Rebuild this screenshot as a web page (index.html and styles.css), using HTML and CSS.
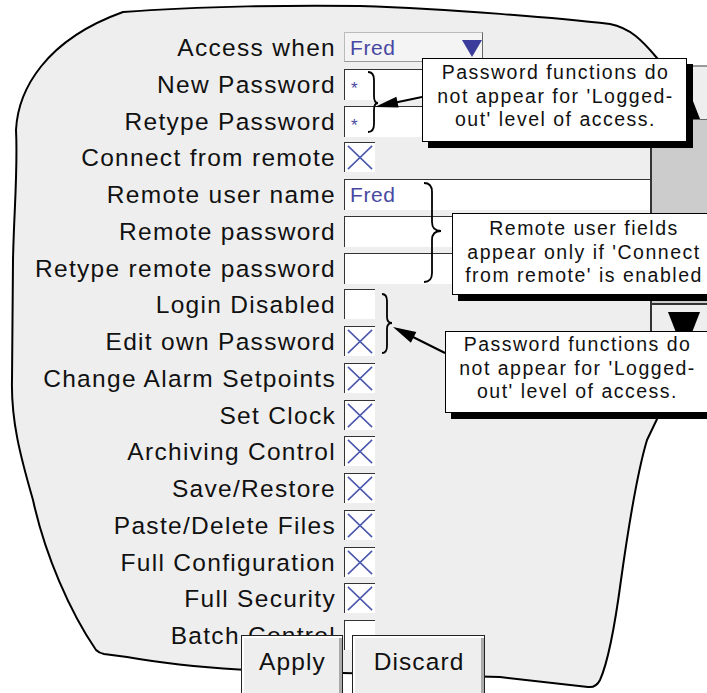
FILE: index.html
```html
<!DOCTYPE html>
<html lang="en">
<head>
    <meta charset="UTF-8">
    <meta name="viewport" content="width=device-width, initial-scale=1.0">
    <title>Security - user access</title>
    <link rel="stylesheet" href="styles.css">
</head>
<body>
    <svg class="defs" width="0" height="0">
        <defs>
            <symbol id="cross" viewBox="0 0 31 30">
                <path d="M3 3 L28 27 M28 3 L3 27"/>
            </symbol>
        </defs>
    </svg>

    <div class="canvas">
        <!-- BLOB OUTLINE -->
        <svg class="blob" width="707" height="693">
            <path d="M123 12 C200 6 300 5 360 6 C450 9 560 18 610 24 C630 28 642 40 657 58 L685 85 L705 140 L705 300 L672 400 L658 417 L647 440 C638 470 628 530 621 580 C615 625 609 660 600 680 Q596 688 588 687 L500 677 L343 673 C280 672 200 670 127 657 L104 654 Q99 653 96 650 C70 612 45 555 33 500 C20 455 11 420 12 380 L13 260 C14 210 18 170 16 130 C18 90 45 40 123 12 Z"/>
        </svg>

        <!-- FORM -->
        <div class="panel">
            <div class="rows">
                <div class="row">
                    <span class="label">Access when</span>
                    <span class="field select"><span class="value">Fred</span><i class="caret"></i></span>
                </div>
                <div class="row">
                    <span class="label">New Password</span>
                    <span class="field text"><span class="star">*</span></span>
                </div>
                <div class="row">
                    <span class="label">Retype Password</span>
                    <span class="field text"><span class="star">*</span></span>
                </div>
                <div class="row">
                    <span class="label">Connect from remote</span>
                    <span class="field check"><svg><use href="#cross"/></svg></span>
                </div>
                <div class="row">
                    <span class="label">Remote user name</span>
                    <span class="field text"><span class="value">Fred</span></span>
                </div>
                <div class="row">
                    <span class="label">Remote password</span>
                    <span class="field text"></span>
                </div>
                <div class="row">
                    <span class="label">Retype remote password</span>
                    <span class="field text"></span>
                </div>
                <div class="row">
                    <span class="label">Login Disabled</span>
                    <span class="field check"></span>
                </div>
                <div class="row">
                    <span class="label">Edit own Password</span>
                    <span class="field check"><svg><use href="#cross"/></svg></span>
                </div>
                <div class="row">
                    <span class="label">Change Alarm Setpoints</span>
                    <span class="field check"><svg><use href="#cross"/></svg></span>
                </div>
                <div class="row">
                    <span class="label">Set Clock</span>
                    <span class="field check"><svg><use href="#cross"/></svg></span>
                </div>
                <div class="row">
                    <span class="label">Archiving Control</span>
                    <span class="field check"><svg><use href="#cross"/></svg></span>
                </div>
                <div class="row">
                    <span class="label">Save/Restore</span>
                    <span class="field check"><svg><use href="#cross"/></svg></span>
                </div>
                <div class="row">
                    <span class="label">Paste/Delete Files</span>
                    <span class="field check"><svg><use href="#cross"/></svg></span>
                </div>
                <div class="row">
                    <span class="label">Full Configuration</span>
                    <span class="field check"><svg><use href="#cross"/></svg></span>
                </div>
                <div class="row">
                    <span class="label">Full Security</span>
                    <span class="field check"><svg><use href="#cross"/></svg></span>
                </div>
                <div class="row">
                    <span class="label">Batch Control</span>
                    <span class="field check"></span>
                </div>
            </div>
            <!-- SCROLL BAR -->
            <div class="scrollbar">
                <div class="sb-btn sb-up"><i></i></div>
                <div class="sb-track"></div>
                <div class="sb-btn sb-down"><i></i></div>
            </div>
        </div>

        <!-- BRACES AND ARROWS -->
        <svg class="marks" width="707" height="693">
            <path class="brace" d="M368 72 Q374 72 374 80 L374 96 Q374 103 378 103 Q374 103 374 110 L374 124 Q374 132 368 132"/>
            <path class="brace" d="M424 183 Q432 183 432 192 L432 222 Q432 231 441 231 Q432 231 432 240 L432 273 Q432 282 424 282"/>
            <path class="brace" d="M382 294 Q387 294 387 301 L387 317 Q387 323 392 323 Q387 323 387 329 L387 346 Q387 353 382 353"/>
            <line class="shaft" x1="422" y1="97" x2="397" y2="102.3"/>
            <polygon class="head" points="375,107 398.6,107.6 396.4,96.8"/>
            <line class="shaft" x1="445" y1="353" x2="413" y2="337"/>
            <polygon class="head" points="393,327 410.9,342.7 416.3,331.9"/>
        </svg>

        <!-- CALLOUTS -->
        <div class="callout c1">Password functions do<br>not appear for 'Logged-<br>out' level of access.</div>
        <div class="callout c2">Remote user fields<br>appear only if 'Connect<br>from remote' is enabled</div>
        <div class="callout c3">Password functions do<br>not appear for 'Logged-<br>out' level of access.</div>

        <!-- BUTTONS -->
        <div class="btn apply">Apply</div>
        <div class="btn discard">Discard</div>
    </div>
</body>
</html>
```
FILE: styles.css
```css
*{
    box-sizing: border-box;
}
body{
    margin: 0;
    background-color: white;
    font-family: "Liberation Sans", Arial, sans-serif;
    color: #111;
    overflow: hidden;
}
.defs{
    position: absolute;
}
.canvas{
    position: relative;
    width: 707px;
    height: 693px;
    overflow: hidden;
}
/* BLOB */
.blob{
    position: absolute;
    left: 0;
    top: 0;
}
.blob path{
    fill: #eeeeee;
    stroke: black;
    stroke-width: 2;
    stroke-linejoin: round;
}
/* FORM */
.panel{
    position: relative;
    display: flex;
    align-items: flex-start;
    padding-top: 32px;
}
.rows{
    width: 650px;
    flex: none;
    display: flex;
    flex-direction: column;
}
.row{
    height: 36.75px;
    display: grid;
    grid-template-columns: 336px 306px;
    column-gap: 8px;
    align-items: start;
}
.label{
    text-align: right;
    font-size: 24.5px;
    letter-spacing: 1.3px;
    line-height: 30px;
    padding-top: 1px;
    white-space: nowrap;
}
.field{
    display: block;
    height: 31px;
    background-color: white;
    border-top: 1px solid #333;
    border-left: 1px solid #333;
}
.value{
    display: block;
    color: #4848a2;
    font-size: 21px;
    letter-spacing: 0.6px;
    line-height: 29px;
    padding-left: 5px;
}
.star{
    display: block;
    color: #4848a2;
    font-size: 17px;
    line-height: 22px;
    padding: 8px 0 0 6px;
}
.select{
    width: 139px;
    height: 30px;
    display: flex;
    justify-content: space-between;
    align-items: flex-start;
    background-color: #f4f4f4;
    border-top-color: #bbb;
    border-left-color: #bbb;
    border-right: 1px solid #666;
    border-bottom: 1px solid #999;
}
.caret{
    margin-top: 7px;
    border-left: 10.5px solid transparent;
    border-right: 10.5px solid transparent;
    border-top: 17px solid #3b3b9b;
}
.check{
    width: 31px;
    height: 30px;
}
.check svg{
    display: block;
    width: 30px;
    height: 29px;
    fill: none;
    stroke: #4b57ad;
    stroke-width: 1.6;
}
/* SCROLL BAR */
.scrollbar{
    flex: none;
    width: 65px;
    margin-top: 33px;
    border-left: 2px solid #333;
}
.sb-btn{
    display: flex;
    justify-content: center;
    background-color: #eee;
}
.sb-up{
    height: 55px;
    padding-top: 2px;
    border-top: 2px solid #999;
    border-bottom: 1px solid #666;
}
.sb-up i{
    border-left: 16.5px solid transparent;
    border-right: 16.5px solid transparent;
    border-bottom: 41px solid black;
}
.sb-track{
    height: 183px;
    background-color: #ccc;
}
.sb-down{
    height: 70px;
    padding-top: 7px;
    border-top: 2px solid #333;
}
.sb-down i{
    border-left: 16.5px solid transparent;
    border-right: 16.5px solid transparent;
    border-top: 41px solid black;
}
/* BRACES / ARROWS */
.marks{
    position: absolute;
    left: 0;
    top: 0;
    pointer-events: none;
}
.brace{
    fill: none;
    stroke: black;
    stroke-width: 1.8;
}
.shaft{
    stroke: black;
    stroke-width: 2;
}
.head{
    fill: black;
}
/* CALLOUTS */
.callout{
    position: absolute;
    background-color: white;
    border: 1px solid black;
    box-shadow: 6px 6px 0 black;
    text-align: center;
    font-size: 19.5px;
    letter-spacing: 1.5px;
    line-height: 23.5px;
    padding-left: 2px;
    white-space: nowrap;
}
.c1{
    left: 422px;
    top: 58px;
    width: 265px;
    height: 84px;
    padding-top: 2px;
}
.c2{
    left: 452px;
    top: 213px;
    width: 262px;
    height: 82px;
    padding-top: 3px;
}
.c3{
    left: 445px;
    top: 331px;
    width: 263px;
    height: 82px;
    padding-top: 1px;
}
/* BUTTONS */
.btn{
    position: absolute;
    top: 635px;
    height: 70px;
    background-color: #eee;
    border: 1px solid #222;
    box-shadow: inset 2px 2px 0 white, inset -3px -3px 0 #aaa;
    font-size: 24.5px;
    letter-spacing: 1.1px;
    line-height: 30px;
    padding: 11px 0 0 1px;
    text-align: center;
}
.apply{
    left: 241px;
    width: 102px;
}
.discard{
    left: 352px;
    width: 133px;
}
```
